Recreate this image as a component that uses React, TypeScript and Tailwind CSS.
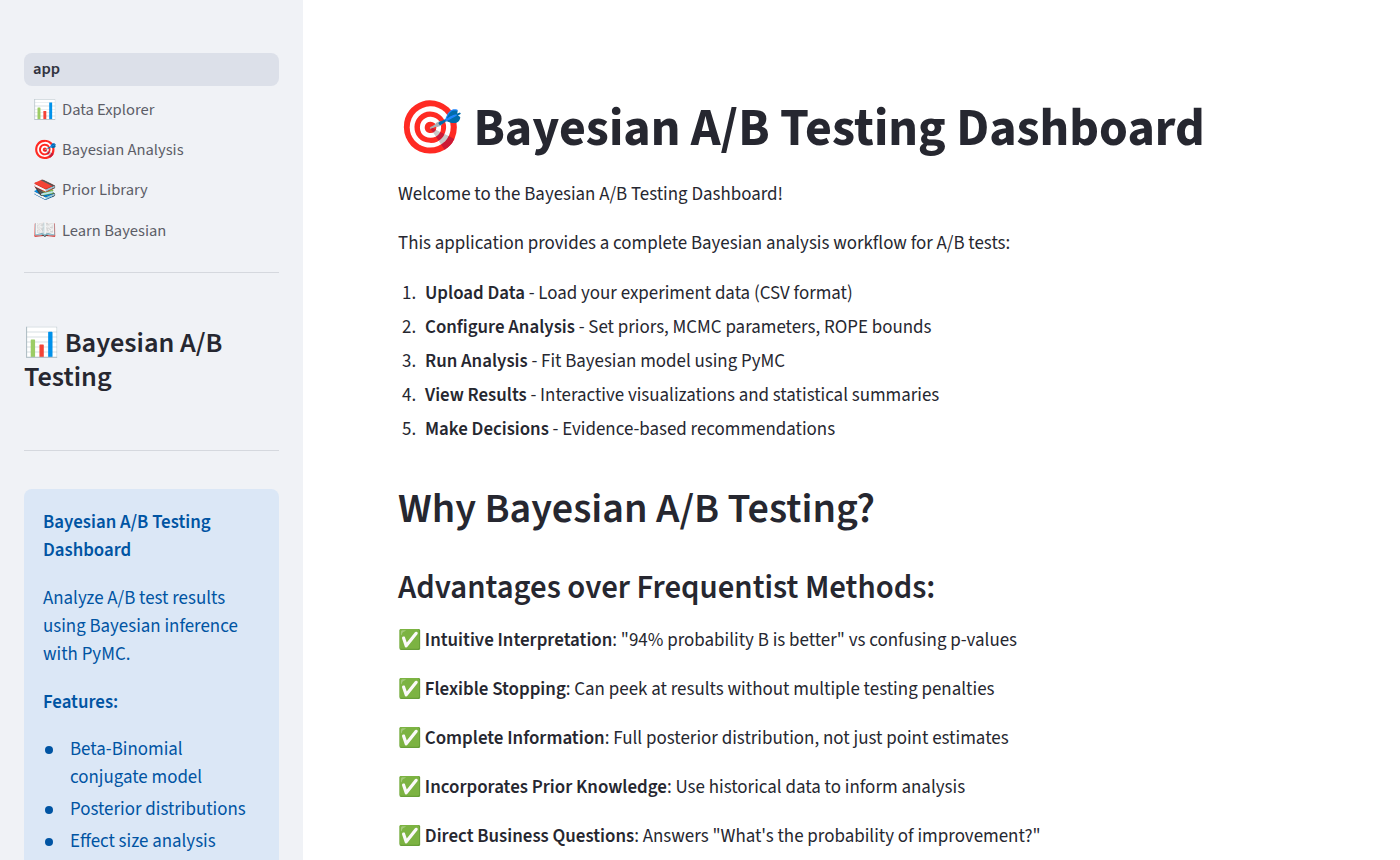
const nav = [
  { icon: "📊", label: "Data Explorer" },
  { icon: "🎯", label: "Bayesian Analysis" },
  { icon: "📚", label: "Prior Library" },
  { icon: "📖", label: "Learn Bayesian" },
];

const steps = [
  { title: "Upload Data", text: "Load your experiment data (CSV format)" },
  { title: "Configure Analysis", text: "Set priors, MCMC parameters, ROPE bounds" },
  { title: "Run Analysis", text: "Fit Bayesian model using PyMC" },
  { title: "View Results", text: "Interactive visualizations and statistical summaries" },
  { title: "Make Decisions", text: "Evidence-based recommendations" },
];

const advantages = [
  { title: "Intuitive Interpretation", text: '"94% probability B is better" vs confusing p-values' },
  { title: "Flexible Stopping", text: "Can peek at results without multiple testing penalties" },
  { title: "Complete Information", text: "Full posterior distribution, not just point estimates" },
  { title: "Incorporates Prior Knowledge", text: "Use historical data to inform analysis" },
  { title: "Direct Business Questions", text: `Answers "What's the probability of improvement?"` },
];

const features = ["Beta-Binomial conjugate model", "Posterior distributions", "Effect size analysis"];

function Sidebar() {
  return (
    <aside className="h-[860px] w-[303px] shrink-0 overflow-hidden bg-[#f0f2f6] px-6 pt-[53px]">
      <div className="flex h-[33px] items-center rounded-lg bg-[#dce0e9] px-[9px] text-[16.5px] font-semibold text-[#31333f]">
        app
      </div>
      <nav className="mt-2 flex flex-col gap-[8.33px]">
        {nav.map((item) => (
          <div key={item.label} className="flex h-[32px] items-center gap-[6px] px-[9px] text-[16.5px] text-[#5c5d67]">
            <span className="w-[23px] text-[19px] leading-none">{item.icon}</span>
            <span>{item.label}</span>
          </div>
        ))}
      </nav>
      <hr className="mt-[25px] border-[#d5d8de]" />
      <h2 className="mt-[53px] text-[28.3px] leading-[34px] font-semibold text-[#262730]">📊 Bayesian A/B Testing</h2>
      <hr className="mt-[56px] border-[#d5d8de]" />
      <div className="mt-[38px] rounded-lg bg-[#dbe7f6] px-[19px] py-5 text-[18.9px] leading-[28px] text-[#0054a3]">
        <p className="font-semibold">Bayesian A/B Testing Dashboard</p>
        <p className="mt-5">Analyze A/B test results using Bayesian inference with PyMC.</p>
        <p className="mt-5 font-semibold">Features:</p>
        <ul className="mt-[19.5px] flex flex-col gap-1">
          {features.map((f) => (
            <li key={f} className="flex">
              <span className="flex h-[28px] w-[27px] shrink-0 items-center pl-[2px]">
                <span className="size-[8px] rounded-full bg-[#0054a3]" />
              </span>
              <span>{f}</span>
            </li>
          ))}
        </ul>
      </div>
    </aside>
  );
}

export default function App() {
  return (
    <div className="flex h-[860px] overflow-hidden bg-white font-['Source_Sans_3','Source_Sans_Pro','Noto_Sans_CJK_SC',sans-serif] text-[#262730]">
      <Sidebar />
      <main className="flex-1 pl-[95px] pt-[97px]">
        <h1 className="text-[52px] leading-[64px] font-bold">🎯 Bayesian A/B Testing Dashboard</h1>
        <p className="mt-5 text-[18.9px] leading-[28px]">Welcome to the Bayesian A/B Testing Dashboard!</p>
        <p className="mt-[21px] text-[18.9px] leading-[28px]">This application provides a complete Bayesian analysis workflow for A/B tests:</p>
        <ol className="mt-[21.5px] flex flex-col gap-[6px] text-[18.9px] leading-[28px]">
          {steps.map((s, i) => (
            <li key={s.title} className="flex">
              <span className="w-[27px] shrink-0 pl-[4px]">{i + 1}.</span>
              <span>
                <b className="font-semibold">{s.title}</b> - {s.text}
              </span>
            </li>
          ))}
        </ol>
        <h2 className="mt-[39px] text-[42.1px] leading-[52px] font-semibold">Why Bayesian A/B Testing?</h2>
        <h3 className="mt-[31px] text-[32.75px] leading-[44px] font-semibold">Advantages over Frequentist Methods:</h3>
        <div className="mt-[17px] flex flex-col gap-[21px] text-[18.95px] leading-[28px]">
          {advantages.map((a) => (
            <p key={a.title}>
              <span className="mr-[-1px]">✅</span> <b className="font-semibold">{a.title}</b>: {a.text}
            </p>
          ))}
        </div>
      </main>
    </div>
  );
}
